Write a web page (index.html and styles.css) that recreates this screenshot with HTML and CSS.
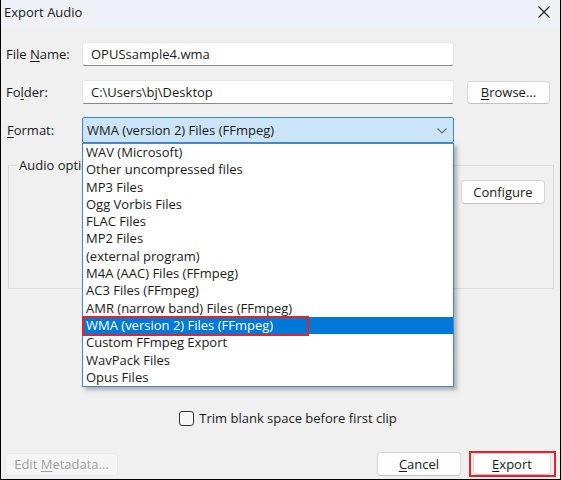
FILE: index.html
```html
<!DOCTYPE html>
<html lang="en">
<head>
<meta charset="utf-8">
<title>Export Audio</title>
<link rel="stylesheet" href="styles.css">
</head>
<body>
<div class="window">
  <div class="titlebar">
    <span class="title">Export Audio</span>
    <svg class="close" width="12" height="12" viewBox="0 0 12 12"><path d="M0.5 0.5 L11.5 11.5 M11.5 0.5 L0.5 11.5" stroke="#1a1a1a" stroke-width="1.1" fill="none"/></svg>
  </div>
  <div class="content">
    <div class="row row-name">
      <span class="lbl">File <u>N</u>ame:</span>
      <div class="input">OPUSsample4.wma</div>
    </div>
    <div class="row row-folder">
      <span class="lbl">Fo<u>l</u>der:</span>
      <div class="input">C:\Users\bj\Desktop</div>
      <button class="btn browse"><span><u>B</u>rowse...</span></button>
    </div>
    <div class="row row-format">
      <span class="lbl"><u>F</u>ormat:</span>
      <div class="select">
        <span class="select-text">WMA (version 2) Files (FFmpeg)</span>
        <svg class="chev" width="10" height="6" viewBox="0 0 10 6"><path d="M0.5 0.5 L5 5 L9.5 0.5" stroke="#6b6b6b" stroke-width="1.1" fill="none"/></svg>
        <ul class="list">
          <li>WAV (Microsoft)</li>
          <li>Other uncompressed files</li>
          <li>MP3 Files</li>
          <li>Ogg Vorbis Files</li>
          <li>FLAC Files</li>
          <li>MP2 Files</li>
          <li>(external program)</li>
          <li>M4A (AAC) Files (FFmpeg)</li>
          <li>AC3 Files (FFmpeg)</li>
          <li>AMR (narrow band) Files (FFmpeg)</li>
          <li class="sel"><span class="redmark"></span>WMA (version 2) Files (FFmpeg)</li>
          <li>Custom FFmpeg Export</li>
          <li>WavPack Files</li>
          <li>Opus Files</li>
        </ul>
      </div>
    </div>
    <fieldset class="group">
      <legend>Audio options</legend>
      <div class="group-body">
        <button class="btn configure">Configure</button>
      </div>
    </fieldset>
    <div class="trim">
      <span class="checkbox"></span>
      <span>Trim blank space before first clip</span>
    </div>
    <div class="footer">
      <button class="btn disabled"><span>Edit <u>M</u>etadata...</span></button>
      <div class="spacer"></div>
      <button class="btn cancel"><span><u>C</u>ancel</span></button>
      <div class="redbox"><button class="btn export"><span><u>E</u>xport</span></button></div>
    </div>
  </div>
</div>
</body>
</html>
```

FILE: styles.css
```css
* { box-sizing: border-box; }
html, body { margin: 0; padding: 0; background: #f0f0f0; }
body {
  font-family: "Open Sans", "Noto Sans", "DejaVu Sans", sans-serif;
  font-size: 13px;
  color: #1a1a1a;
}
.window {
  width: 561px;
  height: 480px;
  background: #f0f0f0;
  border-left: 1px solid #000;
  border-right: 1px solid #000;
  border-bottom: 1px solid #000;
  display: flex;
  flex-direction: column;
}
.titlebar {
  height: 28px;
  background: #eef2f8;
  display: flex;
  align-items: center;
  justify-content: space-between;
  padding: 0 10px 4px 3px;
  flex-shrink: 0;
}
.title { font-size: 13px; color: #1a1a1a; }
.close { display: block; }
.content {
  flex: 1;
  display: flex;
  flex-direction: column;
  padding: 0 4px 0 3px;
}
.row {
  display: flex;
  align-items: center;
  height: 24px;
}
.row-name { margin-top: 14px; }
.row-folder { margin-top: 14px; }
.row-format { margin-top: 13px; height: 26px; position: relative; z-index: 5; }
.lbl {
  width: 78px;
  padding-left: 2px;
  flex-shrink: 0;
}
.row-format .lbl { padding-left: 3px; }
u { text-decoration: underline; text-underline-offset: 2px; }
.input {
  width: 372px;
  height: 24px;
  background: #fff;
  border: 1px solid #e6e6e6;
  border-bottom: 1px solid #8a8a8a;
  border-radius: 3px;
  padding: 0 8px;
  display: flex;
  align-items: center;
}
.btn {
  font: inherit;
  color: #1a1a1a;
  background: #fdfdfd;
  border: 1px solid #d6d6d6;
  border-bottom-color: #c2c2c2;
  border-radius: 4px;
  height: 23px;
  padding: 0;
  display: flex;
  align-items: center;
  justify-content: center;
}
.browse { width: 83px; margin-left: 13px; }
.select {
  width: 372px;
  height: 26px;
  background: #cce4f7;
  border: 1px solid #3b8ad6;
  border-radius: 2px;
  position: relative;
  display: flex;
  align-items: center;
  padding-left: 4px;
}
.select-text { flex: 1; }
.chev { margin-right: 6px; margin-top: 1px; }
.list {
  position: absolute;
  top: 25px;
  left: -1px;
  width: 372px;
  margin: 0;
  padding: 0;
  list-style: none;
  background: #fff;
  border: 1px solid #3b8ad6;
  box-shadow: 3px 3px 4px rgba(0,0,0,0.28);
}
.list li {
  height: 17.3px;
  line-height: 17.3px;
  padding-left: 3px;
  white-space: nowrap;
  position: relative;
}
.list li.sel { background: #0078d7; color: #fff; }
.redmark {
  position: absolute;
  left: -1px;
  top: -1px;
  width: 227px;
  height: 20px;
  border: 2px solid #e3242b;
}
.group {
  margin: 13px 0 0 4px;
  width: 546px;
  height: 133px;
  border: 1px solid #dcdcdc;
  border-radius: 0;
  padding: 0 8px 0 8px;
  min-width: 0;
}
.group legend {
  padding: 0 2px;
  font-size: 13px;
}
.group-body {
  display: flex;
  justify-content: flex-end;
  padding-top: 6px;
}
.configure { width: 84px; height: 24px; }
.trim {
  margin-top: 120px;
  display: flex;
  align-items: center;
  justify-content: center;
  gap: 5px;
  padding-left: 16px;
}
.checkbox {
  width: 15px;
  height: 15px;
  border: 1px solid #333;
  border-radius: 3px;
  background: #f7f7f7;
}
.footer {
  margin-top: 24px;
  display: flex;
  align-items: center;
}
.disabled {
  width: 113px;
  color: #a0a0a0;
  background: #f5f5f5;
  border-color: #e9e9e9;
  margin-left: 1px;
}
.spacer { flex: 1; }
.cancel { width: 84px; height: 24px; margin-right: 8px; }
.redbox {
  border: 2px solid #e3242b;
  padding: 1px 3px 1px 2px;
  width: 87px;
  height: 26px;
  display: flex;
  align-items: center;
  margin-right: 0;
}
.export { width: 78px; height: 22px; }
```
